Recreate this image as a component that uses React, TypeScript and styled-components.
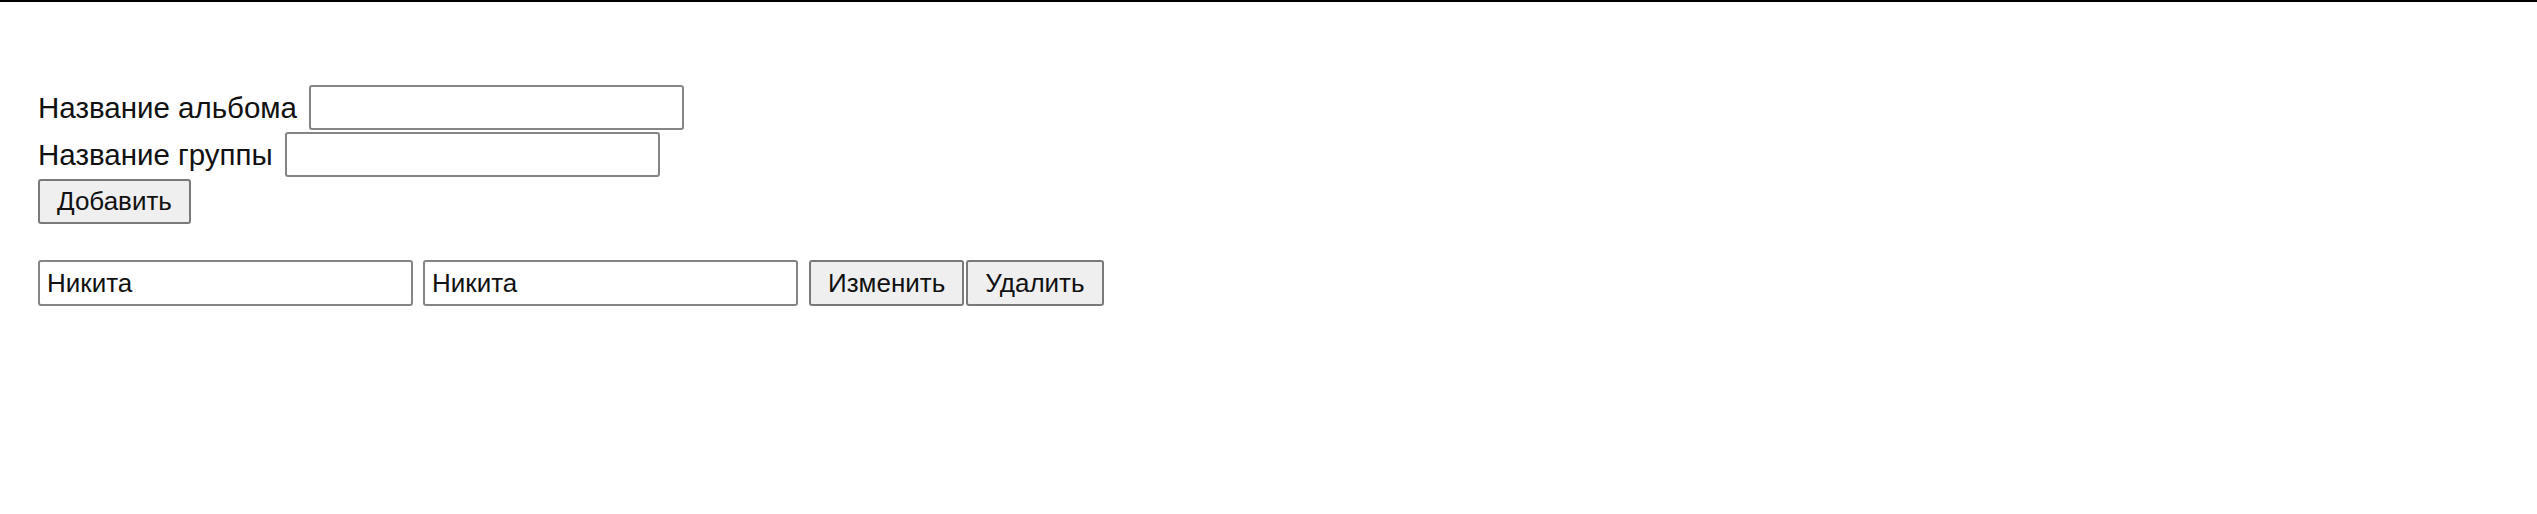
import React from "react";
import styled, { createGlobalStyle } from "styled-components";

const Global = createGlobalStyle`
  html, body { margin: 0; padding: 0; background: #ffffff; }
  body { font-family: "Liberation Sans", Arial, sans-serif; color: #111; }
`;

const TopBar = styled.div`
  height: 2px;
  background: #000;
`;

const Page = styled.div`
  padding: 83px 0 0 38px;
  display: flex;
  flex-direction: column;
`;

const Form = styled.form`
  display: flex;
  flex-direction: column;
  gap: 2px;
  align-items: flex-start;
`;

const Field = styled.label`
  display: flex;
  align-items: center;
  gap: 12px;
  font-size: 29.5px;
  line-height: 1;
  color: #111;
`;

const TextInput = styled.input`
  box-sizing: border-box;
  width: 375px;
  height: 45px;
  border: 2px solid #858585;
  border-radius: 3px;
  padding: 0 7px;
  font-family: "Liberation Sans", Arial, sans-serif;
  font-size: 26px;
  color: #111;
  background: #fff;
  outline: none;
`;

const Button = styled.button`
  box-sizing: border-box;
  height: 45px;
  padding: 0 17px;
  border: 2px solid #7a7a7a;
  border-radius: 3px;
  background: #efefef;
  font-family: "Liberation Sans", Arial, sans-serif;
  font-size: 26px;
  color: #111;
  cursor: pointer;
`;

const List = styled.div`
  margin-top: 36px;
  display: flex;
  flex-direction: column;
`;

const Item = styled.div`
  display: flex;
  align-items: center;
  height: 46px;
`;

const ItemInputs = styled.div`
  display: flex;
  gap: 10px;
  margin-right: 11px;
`;

const ItemInput = styled(TextInput)`
  height: 46px;
`;

const ItemButtons = styled.div`
  display: flex;
  gap: 2px;
`;

const ItemButton = styled(Button)`
  height: 46px;
`;

export default function App() {
  return (
    <>
      <Global />
      <TopBar />
      <Page>
        <Form onSubmit={(e) => e.preventDefault()}>
          <Field>
            Название альбома
            <TextInput type="text" />
          </Field>
          <Field>
            Название группы
            <TextInput type="text" />
          </Field>
          <Button type="submit">Добавить</Button>
        </Form>
        <List>
          <Item>
            <ItemInputs>
              <ItemInput type="text" defaultValue="Никита" />
              <ItemInput type="text" defaultValue="Никита" />
            </ItemInputs>
            <ItemButtons>
              <ItemButton type="button">Изменить</ItemButton>
              <ItemButton type="button">Удалить</ItemButton>
            </ItemButtons>
          </Item>
        </List>
      </Page>
    </>
  );
}
